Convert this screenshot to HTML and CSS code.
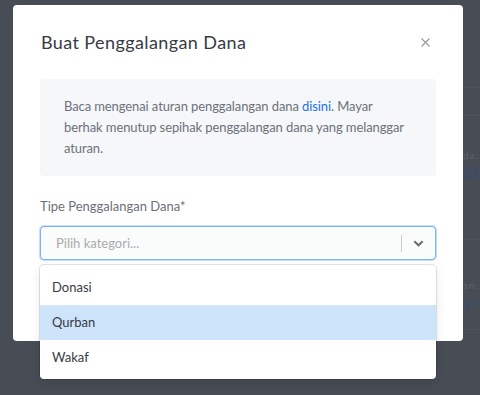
FILE: index.html
```html
<!DOCTYPE html>
<html lang="id">
<head>
    <meta charset="UTF-8">
    <meta name="viewport" content="width=device-width, initial-scale=1.0">
    <title>Buat Penggalangan Dana</title>
    <link rel="stylesheet" href="styles.css">
</head>
<body>
    <div class="page">
        <div class="page-row"></div>
        <div class="page-row"></div>
        <div class="page-field">
            <span class="page-label">da:</span>
            <span class="page-value">bb</span>
        </div>
        <div class="page-field">
            <span class="page-label">an:</span>
            <span class="page-value">yr.</span>
        </div>
    </div>

    <div class="modal">
        <div class="modal-header">
            <h2>Buat Penggalangan Dana</h2>
            <button class="close" aria-label="Tutup">
                <svg width="9" height="9" viewBox="0 0 9 9">
                    <path d="M0.5 0.5 L8.5 8.5 M8.5 0.5 L0.5 8.5" stroke="#9a9a9a" stroke-width="1.2" fill="none"/>
                </svg>
            </button>
        </div>

        <div class="notice">
            Baca mengenai aturan penggalangan dana <a href="#">disini</a>. Mayar<br>
            berhak menutup sepihak penggalangan dana yang melanggar<br>
            aturan.
        </div>

        <label class="field-label">Tipe Penggalangan Dana*</label>
        <div class="select">
            <span class="placeholder">Pilih kategori...</span>
            <span class="separator"></span>
            <span class="chevron">
                <svg width="11" height="7" viewBox="0 0 11 7">
                    <path d="M1.3 1.3 L5.5 5.3 L9.7 1.3" stroke="#6b6b6b" stroke-width="2" fill="none"/>
                </svg>
            </span>
        </div>
    </div>

    <div class="menu">
        <div class="option">Donasi</div>
        <div class="option selected">Qurban</div>
        <div class="option">Wakaf</div>
    </div>
</body>
</html>
```

FILE: styles.css
```css
body {
    margin: 0;
    padding: 0;
    width: 480px;
    height: 395px;
    overflow: hidden;
    background: #474c55;
    font-family: 'Lato', 'Liberation Sans', sans-serif;
    position: relative;
}

/* dimmed page behind the modal, only its right edge shows */
.page {
    padding-left: 463px;
    color: #5b6069;
}

.page-row {
    height: 27px;
    border-bottom: 1px solid #4e535c;
}

.page-row:first-child {
    height: 87px;
}

.page-field {
    height: 124px;
    padding-top: 33px;
    box-sizing: border-box;
    border-bottom: 1px solid #4e535c;
    display: flex;
    flex-direction: column;
    overflow: hidden;
    white-space: nowrap;
}

.page-field:last-child {
    height: 90px;
    padding-top: 39px;
}

.page-label {
    font-size: 10px;
    line-height: 12px;
    letter-spacing: 1px;
    color: #5e636b;
}

.page-value {
    font-size: 17px;
    line-height: 24px;
    color: #3b4d6a;
}

.modal {
    position: absolute;
    left: 13px;
    top: 5px;
    width: 450px;
    height: 336px;
    box-sizing: border-box;
    background: #fff;
    border-radius: 4px;
    padding: 25px 27px 0 27px;
}

.modal-header {
    display: flex;
    justify-content: space-between;
    align-items: center;
    height: 24px;
    margin-bottom: 25px;
}

.modal-header h2 {
    margin: 0;
    padding-left: 1px;
    font-size: 18px;
    font-weight: normal;
    letter-spacing: 0.4px;
    color: #363b44;
}

.close {
    border: none;
    background: none;
    padding: 0;
    margin-right: 6px;
    display: flex;
    cursor: pointer;
}

.notice {
    background: #f6f7f9;
    border-radius: 3px;
    padding: 17px 24px;
    font-size: 13px;
    line-height: 21px;
    letter-spacing: -0.1px;
    color: #6c727c;
}

.notice a {
    color: #1a73e8;
    text-decoration: none;
}

.field-label {
    display: block;
    margin-top: 21px;
    font-size: 13px;
    line-height: 18px;
    color: #6b7079;
}

.select {
    margin-top: 11px;
    height: 34px;
    box-sizing: border-box;
    border: 1px solid #7fb2f0;
    box-shadow: 0 0 0 1px #c9def9;
    border-radius: 4px;
    background: #fafbfb;
    display: flex;
    align-items: center;
    padding-left: 15px;
}

.placeholder {
    flex: 1;
    font-size: 13px;
    color: #a9abae;
}

.separator {
    width: 1px;
    height: 17px;
    background: #cccccc;
}

.chevron {
    width: 33px;
    display: flex;
    justify-content: center;
}

.menu {
    position: absolute;
    left: 40px;
    top: 265px;
    width: 396px;
    padding: 4px 0;
    background: #fff;
    border-radius: 4px;
    box-shadow: 0 0 0 1px rgba(0, 0, 0, 0.1), 0 4px 11px rgba(0, 0, 0, 0.1);
}

.option {
    height: 35px;
    line-height: 35px;
    padding: 0 12px;
    font-size: 13px;
    color: #363b44;
}

.option:first-child {
    height: 36px;
    line-height: 36px;
}

.option.selected {
    background: #cde4fb;
}
```
